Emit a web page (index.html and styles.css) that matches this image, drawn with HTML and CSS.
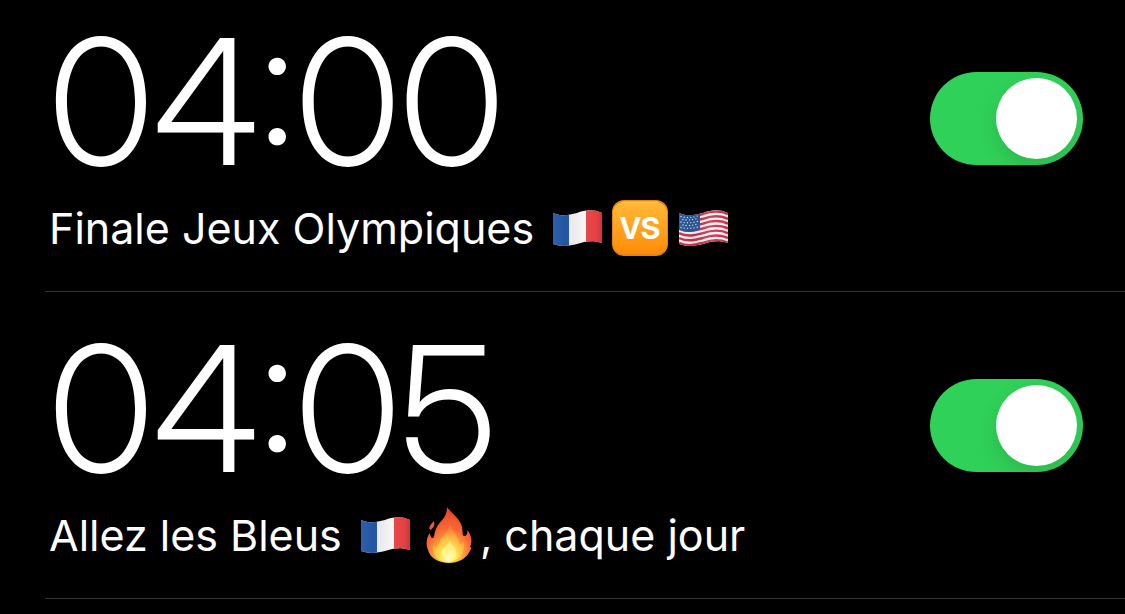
FILE: index.html
```html
<!DOCTYPE html>
<html lang="fr">
<head>
	<meta charset="UTF-8">
	<meta name="viewport" content="width=device-width, initial-scale=1">
	<title>Alarmes</title>
	<link rel="stylesheet" href="styles.css">
</head>
<body>
	<!-- shared drawings -->
	<svg class="defs" width="0" height="0" aria-hidden="true">
		<defs>
			<linearGradient id="shine" x1="0" x2="1" y1="0" y2="0">
				<stop offset="0" stop-color="#fff" stop-opacity="0.04"/>
				<stop offset="0.25" stop-color="#000" stop-opacity="0.04"/>
				<stop offset="0.6" stop-color="#fff" stop-opacity="0.1"/>
				<stop offset="0.85" stop-color="#fff" stop-opacity="0.05"/>
				<stop offset="1" stop-color="#000" stop-opacity="0.1"/>
			</linearGradient>
			<linearGradient id="orange" x1="0" x2="0" y1="0" y2="1">
				<stop offset="0" stop-color="#ffb937"/>
				<stop offset="1" stop-color="#ff8c08"/>
			</linearGradient>
			<radialGradient id="fire" cx="0.5" cy="0.9" r="0.85">
				<stop offset="0" stop-color="#ffe84a"/>
				<stop offset="0.3" stop-color="#ffb53a"/>
				<stop offset="0.6" stop-color="#fb6a35"/>
				<stop offset="1" stop-color="#ea4427"/>
			</radialGradient>
			<radialGradient id="core" cx="0.5" cy="0.88" r="0.75">
				<stop offset="0" stop-color="#fffde0"/>
				<stop offset="0.25" stop-color="#fff05a"/>
				<stop offset="0.6" stop-color="#ffc343"/>
				<stop offset="1" stop-color="#fa7b3c"/>
			</radialGradient>
			<clipPath id="wave">
				<path d="M4 13C13 17 20 15 28 13C36 10 44 9 53 13V43C44 40 36 41 28 44C20 46 13 47 4 44Z"/>
			</clipPath>
			<symbol id="france" viewBox="0 0 56 56">
				<g clip-path="url(#wave)">
					<path fill="#f4f4f6" d="M4 8h49v42H4z"/>
					<path fill="#2459a9" d="M4 8h16v42H4z"/>
					<path fill="#e5383b" d="M37 8h16v42H37z"/>
					<path fill="url(#shine)" d="M4 8h49v42H4z"/>
				</g>
			</symbol>
			<symbol id="usa" viewBox="0 0 56 56">
				<g clip-path="url(#wave)">
					<path fill="#f4f2f4" d="M4 8h49v42H4z"/>
					<g fill="none" stroke="#c9304a" stroke-width="2.4">
						<path d="M4 14C13 18 20 16 28 14C36 11 44 10 53 14"/>
						<path d="M4 18.8C13 22.8 20 20.8 28 18.8C36 15.8 44 14.8 53 18.8"/>
						<path d="M4 23.6C13 27.6 20 25.6 28 23.6C36 20.6 44 19.6 53 23.6"/>
						<path d="M4 28.4C13 32.4 20 30.4 28 28.4C36 25.4 44 24.4 53 28.4"/>
						<path d="M4 33.2C13 37.2 20 35.2 28 33.2C36 30.2 44 29.2 53 33.2"/>
						<path d="M4 38C13 42 20 40 28 38C36 35 44 34 53 38"/>
						<path d="M4 42.8C13 46.8 20 44.8 28 42.8C36 39.8 44 38.8 53 42.8"/>
					</g>
					<path fill="#2a5596" d="M4 12C12 17 19 15 25 13V30C18 32 11 33 4 30Z"/>
					<g fill="none" stroke="#dbe6f5" stroke-width="1.4" stroke-linecap="round" stroke-dasharray="0 3.3">
						<path d="M6 16.5Q14 19 24 15.5"/>
						<path d="M8 19.5Q14 21 24 18"/>
						<path d="M6 22Q14 24 24 21"/>
						<path d="M8 25Q14 26.5 24 23.8"/>
						<path d="M6 27.5Q14 29.5 24 26.8"/>
					</g>
					<path fill="url(#shine)" d="M4 8h49v42H4z"/>
				</g>
			</symbol>
			<symbol id="flame" viewBox="0 0 56 56">
				<path fill="url(#fire)" d="M27 0C30 5 40 11 42 20C43 25 42 28 44 29C47 29 48 26 47 23C51 27 53 34 50 40C52 40 51 42 50 44C46 52 38 56 29 56C19 56 10 51 8 43L7 40C6 35 7 29 10 26C10 29 11 31 13 31C15 29 14 26 16 22C19 14 27 12 27 0Z"/>
				<path fill="#ef5734" d="M14 14C15 18 14 21 10 23C8 20 11 17 14 14Z"/>
				<path fill="url(#core)" d="M30 16C29 23 39 27 39 36C39 38 42 37 44 34C46 45 39 54 29 55C19 55 11 49 13 38C15 41 18 40 19 36C21 29 29 26 30 16Z"/>
				<path fill="#fff9a5" opacity="0.6" d="M30 33C30 38 36 39 36 45C37 51 33 54 29 54C23 54 21 50 22 45C23 40 29 39 30 33Z"/>
			</symbol>
		</defs>
	</svg>

	<ul class="alarms">
		<li class="alarm">
			<div class="info">
				<label class="time" for="alarm1">04:00</label>
				<p class="name">Finale Jeux Olympiques
					<span class="emojis">
						<svg class="emoji" role="img" aria-label="France"><use href="#france"/></svg>
						<svg class="emoji" role="img" aria-label="VS" viewBox="0 0 56 56">
							<rect width="56" height="56" rx="12" fill="#e9820f"/>
							<rect x="1" y="2" width="54" height="52" rx="11" fill="url(#orange)"/>
							<path d="M10 2H46" stroke="#ffd070" stroke-width="1" stroke-linecap="round"/>
							<text class="vs" x="28" y="39" text-anchor="middle">VS</text>
						</svg>
						<svg class="emoji" role="img" aria-label="États-Unis"><use href="#usa"/></svg>
					</span>
				</p>
			</div>
			<input class="switch" type="checkbox" id="alarm1" checked>
		</li>
		<li class="alarm">
			<div class="info">
				<label class="time" for="alarm2">04:05</label>
				<p class="name">Allez les Bleus
					<span class="emojis">
						<svg class="emoji" role="img" aria-label="France"><use href="#france"/></svg>
						<svg class="emoji" role="img" aria-label="Feu"><use href="#flame"/></svg>
					</span>, chaque jour</p>
			</div>
			<input class="switch" type="checkbox" id="alarm2" checked>
		</li>
	</ul>
</body>
</html>
```
FILE: styles.css
```css
*{
	margin: 0;
	padding: 0;
	box-sizing: border-box;
}
body{
	background: #000;
	color: #fff;
	font-family: Inter, "Liberation Sans", sans-serif;
}
ul{
	list-style: none;
}
.defs{
	position: absolute;
}
.alarms{
	margin-left: 45px;
}
.alarm{
	display: flex;
	justify-content: space-between;
	align-items: flex-start;
	padding: 0 42px 38px 4px;
	border-bottom: 1px solid #343436;
}
.alarm + .alarm{
	padding-top: 15px;
}
.time{
	display: block;
	font-family: "Inter Display", Inter, "Liberation Sans", sans-serif;
	font-size: 175px;
	font-weight: 300;
	line-height: 203px;
}
.name{
	font-size: 43px;
	line-height: 50px;
	white-space: nowrap;
}
.emojis{
	display: inline-flex;
	gap: 7px;
	margin: -8px 4px -8px 3px;
	vertical-align: -12px;
}
.emoji{
	width: 56px;
	height: 56px;
}
.vs{
	font-family: "Inter Display", Inter, "Liberation Sans", sans-serif;
	font-size: 30px;
	font-weight: 700;
	fill: #fff;
}
.switch{
	flex: none;
	appearance: none;
	width: 153px;
	height: 93px;
	margin-top: 72px;
	padding: 6px;
	border-radius: 47px;
	background: #4b4b50;
	overflow: hidden;
	cursor: pointer;
}
.switch::before{
	content: "";
	display: block;
	width: 81px;
	height: 81px;
	border-radius: 50%;
	background: #fff;
	box-shadow: 0 8px 20px rgba(0, 0, 0, 0.12);
}
.switch:checked{
	background: #30d158;
}
.switch:checked::before{
	margin-left: auto;
}
```
